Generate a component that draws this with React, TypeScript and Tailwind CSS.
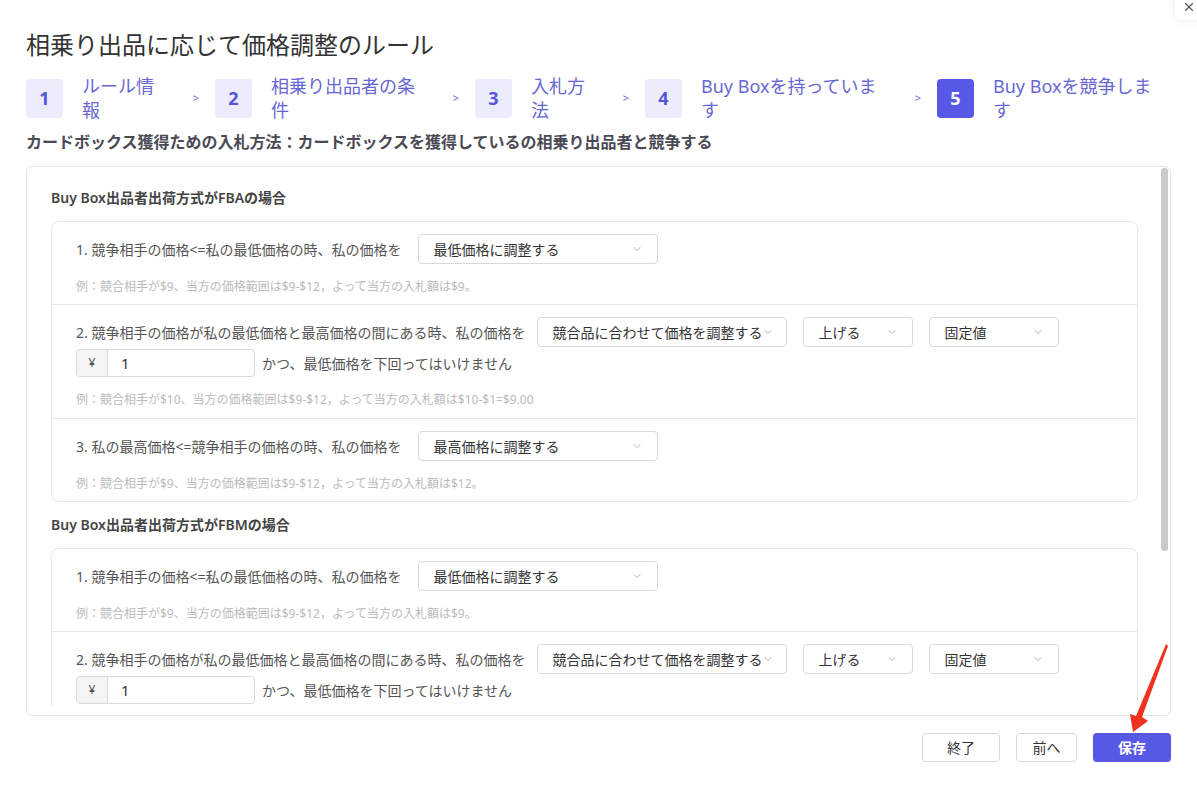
import React from 'react';
import { ChevronDown, X } from 'lucide-react';

const steps = [
  { n: 1, label: 'ルール情報', w: 'w-[189px]', tw: 'w-[80px]' },
  { n: 2, label: '相乗り出品者の条件', w: 'w-[260px]', tw: 'w-[150px]' },
  { n: 3, label: '入札方法', w: 'w-[170px]', tw: 'w-[60px]' },
  { n: 4, label: 'Buy Boxを持っています', w: 'w-[292px]', tw: 'w-[185px]' },
  { n: 5, label: 'Buy Boxを競争します', w: 'w-[233px]', tw: 'w-[165px]' },
];

function Select({ text, className }: { text: string; className: string }) {
  return (
    <div className={`h-[30px] border border-[#d9d9d9] rounded-[4px] bg-white pl-[14px] pr-[14px] flex items-center justify-between text-[14px] text-[#333] shrink-0 ${className}`}>
      <span className="whitespace-nowrap">{text}</span>
      <ChevronDown className="h-[12px] w-[12px] text-[#999] shrink-0" strokeWidth={1.5} />
    </div>
  );
}

function Example({ text }: { text: string }) {
  return <p className="mt-[14px] text-[12px] leading-[18px] text-[#bbbbbb]">{text}</p>;
}

function Row1({ label, value }: { label: string; value: string }) {
  return (
    <div className="px-[24px] pt-[12px] pb-[8px]">
      <div className="flex items-center gap-[17px] text-[14px] text-[#555]">
        <span>{label}</span>
        <Select text={value} className="w-[240px]" />
      </div>
      <Example text={value === '最高価格に調整する' ? '例：競合相手が$9、当方の価格範囲は$9-$12，よって当方の入札額は$12。' : '例：競合相手が$9、当方の価格範囲は$9-$12，よって当方の入札額は$9。'} />
    </div>
  );
}

function Row2({ example = true }: { example?: boolean }) {
  return (
    <div className="px-[24px] pt-[12px] pb-[9px] border-t border-[#e8e8e8]">
      <div className="flex items-center text-[14px] text-[#555]">
        <span>2. 競争相手の価格が私の最低価格と最高価格の間にある時、私の価格を</span>
        <Select text="競合品に合わせて価格を調整する" className="w-[250px] ml-[12px]" />
        <Select text="上げる" className="w-[110px] ml-[16px]" />
        <Select text="固定値" className="w-[130px] ml-[16px]" />
      </div>
      <div className="mt-[2px] flex items-center text-[14px] text-[#555]">
        <div className="w-[179px] h-[28px] border border-[#d9d9d9] rounded-[4px] flex overflow-hidden">
          <div className="w-[31px] bg-[#f5f5f5] border-r border-[#d9d9d9] flex items-center justify-center text-[12px] text-[#555]">¥</div>
          <div className="flex-1 pl-[13px] flex items-center text-[15px] text-[#333]">1</div>
        </div>
        <span className="ml-[7px]">かつ、最低価格を下回ってはいけません</span>
      </div>
      {example && <Example text="例：競合相手が$10、当方の価格範囲は$9-$12，よって当方の入札額は$10-$1=$9.00" />}
    </div>
  );
}

function Section({ title, full }: { title: string; full: boolean }) {
  return (
    <div>
      <h3 className="text-[14px] leading-[20px] font-semibold text-[#444]">{title}</h3>
      <div className="mt-[13px] border border-[#e8e8e8] rounded-[8px]">
        <Row1 label="1. 競争相手の価格<=私の最低価格の時、私の価格を" value="最低価格に調整する" />
        <Row2 example={full} />
        {full && (
          <div className="border-t border-[#e8e8e8]">
            <Row1 label="3. 私の最高価格<=競争相手の価格の時、私の価格を" value="最高価格に調整する" />
          </div>
        )}
      </div>
    </div>
  );
}

export default function App() {
  return (
    <div
      className="relative w-[1197px] h-[786px] bg-white overflow-hidden px-[26px] pt-[29px]"
      style={{ fontFamily: '"Noto Sans", "Noto Sans CJK JP", sans-serif' }}
    >
      {/* close */}
      <div className="absolute top-[-8px] right-[-6px] w-[28px] h-[28px] bg-white rounded-[6px] shadow-[0_0_10px_rgba(0,0,0,0.08)] flex items-center justify-center">
        <X className="h-[14px] w-[14px] text-[#555] mt-[2px]" strokeWidth={2} />
      </div>

      <h1 className="text-[24px] leading-[32px] text-[#333]">相乗り出品に応じて価格調整のルール</h1>

      {/* steps */}
      <div className="mt-[13px] flex items-center">
        {steps.map((s, i) => (
          <div key={s.n} className={`flex items-center ${s.w}`}>
            <div
              className={`w-[37px] h-[39px] rounded-[4px] flex items-center justify-center text-[18px] font-bold shrink-0 ${
                s.n === 5 ? 'bg-[#5858e6] text-white' : 'bg-[#ececfc] text-[#5555d5]'
              }`}
            >
              {s.n}
            </div>
            <div className={`ml-[19px] ${s.tw} text-[18px] leading-[24px] text-[#6767d4]`}>{s.label}</div>
            {i < steps.length - 1 && (
              <span className="ml-auto mr-[16px] text-[11px] text-[#6767d4]">&gt;</span>
            )}
          </div>
        ))}
      </div>

      <p className="mt-[9px] text-[16px] leading-[22px] font-semibold text-[#4a4a55]">
        カードボックス獲得ための入札方法：カードボックスを獲得しているの相乗り出品者と競争する
      </p>

      {/* panel */}
      <div className="relative mt-[13px] h-[550px] border border-[#e5e5e5] rounded-[6px] overflow-hidden">
        <div className="h-[539px] overflow-hidden pl-[24px] pr-[32px] pt-[21px]">
          <Section title="Buy Box出品者出荷方式がFBAの場合" full />
          <div className="mt-[13px]">
            <Section title="Buy Box出品者出荷方式がFBMの場合" full={false} />
          </div>
        </div>
        <div className="absolute top-[1px] right-[2px] w-[7px] h-[383px] rounded-full bg-[#c9c9ce]" />
      </div>

      {/* footer */}
      <div className="mt-[17px] flex justify-end gap-[16px] text-[14px]">
        <button className="w-[78px] h-[29px] border border-[#d9d9d9] rounded-[4px] text-[#333] bg-white">終了</button>
        <button className="w-[61px] h-[29px] border border-[#d9d9d9] rounded-[4px] text-[#333] bg-white">前へ</button>
        <button className="w-[78px] h-[29px] rounded-[4px] bg-[#5858e6] text-white font-semibold">保存</button>
      </div>

      {/* annotation arrow */}
      <svg className="absolute left-0 top-0 pointer-events-none" width="1197" height="786">
        <polygon
          points="1166,644 1168,646 1142,717 1148,721 1133,732 1130,714 1136,716"
          fill="#f0321e"
        />
      </svg>
    </div>
  );
}
